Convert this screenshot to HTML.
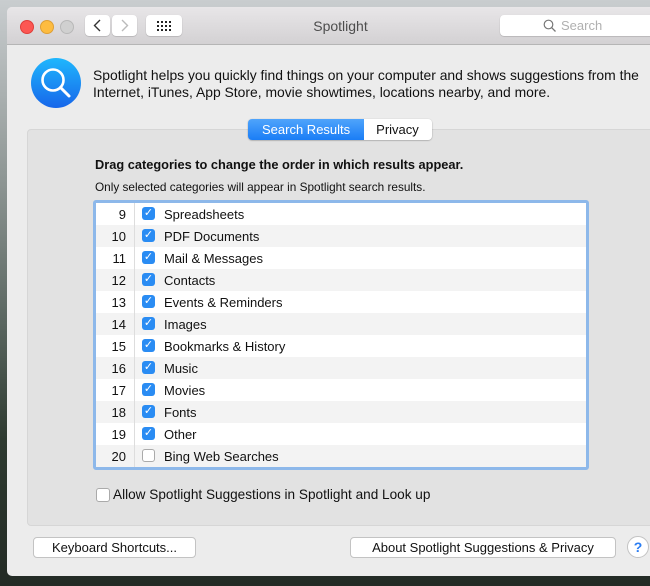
<!DOCTYPE html>
<html><head><style>
body{margin:0;width:650px;height:586px;overflow:hidden;background:linear-gradient(180deg,#c9cdcf 0%,#8f9795 30%,#5a6660 55%,#2e3a30 75%,#232b25 100%);font-family:"Liberation Sans",sans-serif;position:relative}
.win{position:absolute;left:7px;top:7px;width:660px;height:569px;background:#ececec;border-radius:5px 0 0 5px;overflow:hidden}
.tb{position:absolute;left:0;top:0;right:0;height:37px;background:linear-gradient(#e8e6e8,#d3d1d3);border-bottom:1px solid #b5b5b5}
.dot{position:absolute;top:13px;width:12px;height:12px;border-radius:50%}
.btn{position:absolute;background:#fff;border-radius:4px;box-shadow:0 0.5px 1px rgba(0,0,0,.25)}
.title{position:absolute;left:0;width:667px;top:11px;text-align:center;font-size:14px;color:#4d4d4d}
.desc{position:absolute;left:86px;top:60px;font-size:13.9px;line-height:17px;color:#111;white-space:nowrap}
.box{position:absolute;left:20px;top:122px;width:660px;height:395px;background:#e2e2e2;border:1px solid #d6d6d6;border-radius:4px}
.tabs{position:absolute;left:241px;top:112px;height:21px;display:flex;font-size:13px;border-radius:4px;box-shadow:0 0.5px 1.5px rgba(0,0,0,.35);overflow:hidden}
.tabs div{line-height:21px;padding:0 14px}
.list{position:absolute;left:86px;top:193px;width:490px;height:264px;border:3px solid #8db8ea;border-radius:3px;background:#fff}
.row{height:22px;position:relative;font-size:13px;color:#111}
.row:nth-child(odd){background:#f3f3f3}
.num{position:absolute;left:0;width:30px;text-align:right;top:4px}
.cb{position:absolute;left:46px;top:4px;width:13px;height:13px;border-radius:3px;background:#2a8cf3;color:#fff;font-size:11px;line-height:13px;text-align:center}
.cb.off{background:#fff;border:1px solid #aaa;width:11px;height:11px}
.lab{position:absolute;left:68px;top:4px}
.sep{position:absolute;left:38px;top:0;bottom:0;width:1px;background:#ddd;z-index:2}
.pb{position:absolute;background:#fff;border:1px solid #c3c3c3;border-radius:4px;font-size:13px;color:#111;text-align:center;line-height:19px;height:19px}
</style></head><body>
<div class="win">
<div class="tb">
<div class="dot" style="left:13px;background:#fc5753;border:0.5px solid #df3d39"></div>
<div class="dot" style="left:33px;background:#fdbc40;border:0.5px solid #de9f34"></div>
<div class="dot" style="left:53px;background:#d0d0d0;border:0.5px solid #b8b8b8"></div>
<div class="btn" style="left:78px;top:8px;width:25px;height:21px"><svg width="25" height="21"><path d="M15 5 L9.5 10.5 L15 16" stroke="#333" stroke-width="1.4" fill="none"/></svg></div>
<div class="btn" style="left:105px;top:8px;width:25px;height:21px"><svg width="25" height="21"><path d="M10 5 L15.5 10.5 L10 16" stroke="#bbb" stroke-width="1.4" fill="none"/></svg></div>
<div class="btn" style="left:139px;top:8px;width:36px;height:21px"><svg width="36" height="21"><g fill="#222"><rect x="11" y="6" width="2" height="2"/><rect x="15" y="6" width="2" height="2"/><rect x="19" y="6" width="2" height="2"/><rect x="23" y="6" width="2" height="2"/><rect x="11" y="10" width="2" height="2"/><rect x="15" y="10" width="2" height="2"/><rect x="19" y="10" width="2" height="2"/><rect x="23" y="10" width="2" height="2"/><rect x="11" y="14" width="2" height="2"/><rect x="15" y="14" width="2" height="2"/><rect x="19" y="14" width="2" height="2"/><rect x="23" y="14" width="2" height="2"/></g></svg></div>
<div class="title">Spotlight</div>
<div class="btn" style="left:493px;top:8px;width:170px;height:21px;font-size:13px;color:#b0b0b0;line-height:21px"><svg width="14" height="14" style="position:absolute;left:43px;top:4px"><circle cx="5.5" cy="5.5" r="4.3" stroke="#777" stroke-width="1.2" fill="none"/><path d="M8.6 8.6 L12.5 12.5" stroke="#777" stroke-width="1.3"/></svg><span style="position:absolute;left:61px">Search</span></div>
</div>
<svg style="position:absolute;left:23px;top:50px" width="52" height="52"><defs><linearGradient id="g" x1="0" y1="0" x2="0" y2="1"><stop offset="0" stop-color="#1fb7fd"/><stop offset="1" stop-color="#1766ea"/></linearGradient></defs><circle cx="26" cy="26" r="25" fill="url(#g)"/><circle cx="23" cy="23" r="10.5" stroke="#fff" stroke-width="2.6" fill="none"/><path d="M30.5 30.5 L39 39" stroke="#fff" stroke-width="3" stroke-linecap="round"/></svg>
<div class="desc">Spotlight helps you quickly find things on your computer and shows suggestions from the<br>Internet, iTunes, App Store, movie showtimes, locations nearby, and more.</div>
<div class="box"></div>
<div class="tabs"><div style="background:linear-gradient(#4fa4fb,#1a7df6);color:#fff">Search Results</div><div style="background:#fff;color:#111;padding:0 13px 0 12px">Privacy</div></div>
<div style="position:absolute;left:88px;top:150px;font-size:12.8px;font-weight:bold;color:#111;white-space:nowrap">Drag categories to change the order in which results appear.</div>
<div style="position:absolute;left:88px;top:173px;font-size:11.8px;color:#111;white-space:nowrap">Only selected categories will appear in Spotlight search results.</div>
<div class="list">
<div class="sep"></div>
<div class="row" style="background:#fff"><span class="num">9</span><span class="cb">✓</span><span class="lab">Spreadsheets</span></div>
<div class="row"><span class="num">10</span><span class="cb">✓</span><span class="lab">PDF Documents</span></div>
<div class="row"><span class="num">11</span><span class="cb">✓</span><span class="lab">Mail &amp; Messages</span></div>
<div class="row"><span class="num">12</span><span class="cb">✓</span><span class="lab">Contacts</span></div>
<div class="row"><span class="num">13</span><span class="cb">✓</span><span class="lab">Events &amp; Reminders</span></div>
<div class="row"><span class="num">14</span><span class="cb">✓</span><span class="lab">Images</span></div>
<div class="row"><span class="num">15</span><span class="cb">✓</span><span class="lab">Bookmarks &amp; History</span></div>
<div class="row"><span class="num">16</span><span class="cb">✓</span><span class="lab">Music</span></div>
<div class="row"><span class="num">17</span><span class="cb">✓</span><span class="lab">Movies</span></div>
<div class="row"><span class="num">18</span><span class="cb">✓</span><span class="lab">Fonts</span></div>
<div class="row"><span class="num">19</span><span class="cb">✓</span><span class="lab">Other</span></div>
<div class="row"><span class="num">20</span><span class="cb off"></span><span class="lab">Bing Web Searches</span></div>
</div>
<div style="position:absolute;left:89px;top:481px;width:12px;height:12px;border:1px solid #aaa;border-radius:3px;background:#fff"></div>
<div style="position:absolute;left:106px;top:480px;font-size:13.6px;color:#111;white-space:nowrap">Allow Spotlight Suggestions in Spotlight and Look up</div>
<div class="pb" style="left:26px;top:530px;width:161px">Keyboard Shortcuts...</div>
<div class="pb" style="left:343px;top:530px;width:264px">About Spotlight Suggestions &amp; Privacy</div>
<div style="position:absolute;left:620px;top:529px;width:20px;height:20px;border-radius:50%;background:#fff;border:1px solid #c3c3c3;color:#2a7df3;font-weight:bold;font-size:14px;text-align:center;line-height:20px">?</div>
</div>
</body></html>
